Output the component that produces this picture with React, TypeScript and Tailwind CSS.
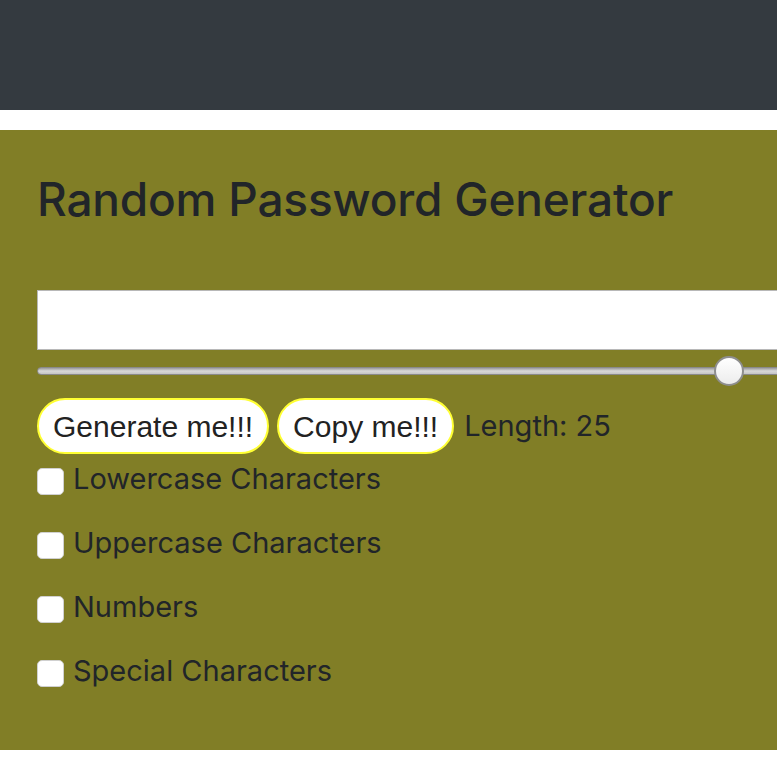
import { useState } from "react";

const options = ["Lowercase Characters", "Uppercase Characters", "Numbers", "Special Characters"];

export default function App() {
  const [length] = useState(25);

  return (
    <div className="w-[777px] h-[778px] overflow-hidden bg-white text-[#212529] font-['Inter',sans-serif]">
      <header className="h-[110px] bg-[#343a40]" />
      <main className="mt-[20px] h-[620px] bg-[#817e26] pl-[37px] pt-[42px]">
        <h1 className="text-[46px] font-medium leading-[1.2] tracking-[-0.2px]">Random Password Generator</h1>

        <input
          type="text"
          readOnly
          className="mt-[63px] block h-[60px] w-[800px] border border-[#b8b8b8] bg-white outline-none"
        />

        <div className="relative mt-[16px] h-[10px] w-[800px]">
          <div className="absolute top-[1px] h-[8px] w-full rounded-full border border-[#8a8a8a] bg-gradient-to-b from-[#9a9a9a] via-[#d9d9d9] to-[#c4c4c4]" />
          <div className="absolute left-[677px] top-[-10px] h-[30px] w-[30px] rounded-full border-2 border-[#8e8e8e] bg-gradient-to-b from-white to-[#ececec]" />
        </div>

        <div className="mt-[22px] flex items-center gap-[8px]">
          <button className="h-[56px] rounded-full border-2 border-[#ffff33] bg-white px-[14px] font-['Liberation_Sans',Arial,sans-serif] text-[30px] text-[#222]">
            Generate me!!!
          </button>
          <button className="h-[56px] rounded-full border-2 border-[#ffff33] bg-white px-[14px] font-['Liberation_Sans',Arial,sans-serif] text-[30px] text-[#222]">
            Copy me!!!
          </button>
          <span className="ml-[2px] text-[29px]">Length: {length}</span>
        </div>

        <div className="mt-[14px] flex flex-col">
          {options.map((o) => (
            <label key={o} className="flex h-[64px] items-start gap-[9px]">
              <span className="h-[27px] w-[27px] shrink-0 rounded-[5px] border border-[#d0d0d0] bg-white" />
              <span className="-mt-[3px] text-[29px] leading-[27px]">{o}</span>
            </label>
          ))}
        </div>
      </main>
    </div>
  );
}
